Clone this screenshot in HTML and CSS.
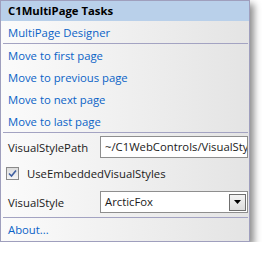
FILE: index.html
```html
<!DOCTYPE html>
<html>
<head>
    <title>C1MultiPage Tasks</title>
    <link rel="stylesheet" href="styles.css">
</head>
<body>
    <div class="panel">
        <div class="panel-header">C1MultiPage Tasks</div>

        <div class="section">
            <a class="task-link" href="#">MultiPage Designer</a>
        </div>

        <div class="section">
            <a class="task-link" href="#">Move to first page</a>
            <a class="task-link" href="#">Move to previous page</a>
            <a class="task-link" href="#">Move to next page</a>
            <a class="task-link" href="#">Move to last page</a>
        </div>

        <div class="section props">
            <div class="prop-row">
                <span class="prop-label">VisualStylePath</span>
                <div class="text-box">~/C1WebControls/VisualSty</div>
            </div>
            <div class="check-row">
                <span class="check-box">
                    <svg width="9" height="9" viewBox="0 0 9 9"><path d="M1 4.5 L3.5 7 L8 1.5" fill="none" stroke="#3f5f9f" stroke-width="1.6"/></svg>
                </span>
                <span>UseEmbeddedVisualStyles</span>
            </div>
            <div class="prop-row">
                <span class="prop-label">VisualStyle</span>
                <div class="text-box select-box">
                    <span>ArcticFox</span>
                    <span class="drop-btn">
                        <svg width="7" height="4" viewBox="0 0 7 4"><path d="M0 0 H7 L3.5 4 Z" fill="#000"/></svg>
                    </span>
                </div>
            </div>
        </div>

        <div class="section last">
            <a class="task-link" href="#">About...</a>
        </div>
    </div>
</body>
</html>
```

FILE: styles.css
```css
body {
    margin: 0;
    background: #ffffff;
    font-family: "Open Sans", "Noto Sans", sans-serif;
    font-size: 11.3px;
}
.panel {
    width: 248px;
    height: 240px;
    border: 1px solid #9f9fbd;
    background: linear-gradient(to right, #fbfbfb, #e4e4e4);
    box-shadow: 4px 4px 7px rgba(0, 0, 0, 0.45);
    display: flex;
    flex-direction: column;
}
.panel-header {
    height: 20px;
    line-height: 20px;
    padding-left: 7px;
    background: #b9d0ea;
    font-weight: bold;
    color: #000;
}
.section {
    margin: 0 1px 0 2px;
    border-bottom: 1px solid #a3a3c2;
    display: flex;
    flex-direction: column;
}
.section.last {
    border-bottom: none;
}
.task-link {
    display: block;
    height: 22px;
    line-height: 23px;
    padding-left: 5px;
    color: #0a63c7;
    text-decoration: none;
}
.props {
    padding: 3px 0 4px;
}
.prop-row {
    display: flex;
    align-items: center;
    height: 22px;
}
.prop-label {
    width: 92px;
    padding-left: 5px;
    color: #1a1a1a;
}
.text-box {
    flex: 1;
    height: 20px;
    line-height: 20px;
    border: 1px solid #8e8e8e;
    background: #fff;
    padding-left: 4px;
    white-space: nowrap;
    overflow: hidden;
    color: #1a1a1a;
}
.select-box {
    display: flex;
    justify-content: space-between;
    align-items: center;
    padding-right: 1px;
}
.drop-btn {
    width: 15px;
    height: 15px;
    border: 1px solid #6f6f6f;
    background: linear-gradient(#f4f4f4, #dcdcdc);
    display: flex;
    align-items: center;
    justify-content: center;
}
.check-row {
    display: flex;
    align-items: center;
    height: 30px;
    margin-bottom: 3px;
    padding-left: 3px;
    color: #1a1a1a;
}
.check-box {
    width: 11px;
    height: 11px;
    border: 1px solid #8a8a8a;
    background: linear-gradient(#dcdcdc, #f6f6f6);
    margin-right: 8px;
    display: flex;
    align-items: center;
    justify-content: center;
}
```
